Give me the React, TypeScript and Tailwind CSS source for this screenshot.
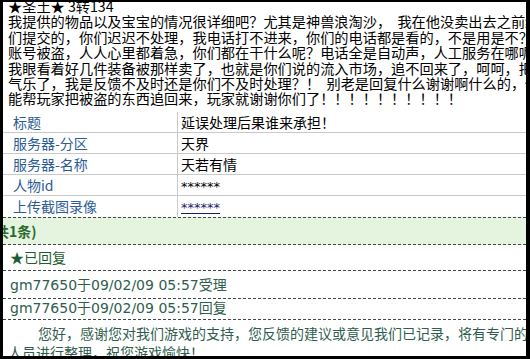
import React from "react";

const lines = [
  "★圣土★ 3转134",
  "我提供的物品以及宝宝的情况很详细吧？尤其是神兽浪淘沙，  我在他没卖出去之前给",
  "们提交的，你们迟迟不处理，我电话打不进来，你们的电话都是看的，不是用是不？",
  "账号被盗，人人心里都着急，你们都在干什么呢？电话全是自动声，人工服务在哪呢",
  "我眼看着好几件装备被那样卖了，也就是你们说的流入市场，追不回来了，呵呵，把",
  "气乐了，我是反馈不及时还是你们不及时处理？！  别老是回复什么谢谢啊什么的，你",
  "能帮玩家把被盗的东西追回来，玩家就谢谢你们了！！！！！！！！！！",
];

const rows: { label: string; value: string; link?: boolean; star?: boolean }[] = [
  { label: "标题", value: "延误处理后果谁来承担！" },
  { label: "服务器-分区", value: "天界" },
  { label: "服务器-名称", value: "天若有情" },
  { label: "人物id", value: "******", star: true },
  { label: "上传截图录像", value: "******", star: true, link: true },
];

export default function App() {
  return (
    <div className="w-[530px] h-[359px] bg-black pt-[2px] pl-[3px]">
      <div className="w-[523px] h-[354px] bg-white overflow-hidden">
        <div className="-mt-[3px] font-['Noto_Sans_CJK_SC',sans-serif] text-black">
          <div className="pl-[5px] text-[14.2px] leading-[15.4px]">
            {lines.map((l, i) => (
              <div key={i} className="whitespace-pre">
                {l}
              </div>
            ))}
          </div>

          <div className="mt-[5px] text-[14px]">
            {rows.map((r, i) => (
              <div
                key={i}
                className={
                  i < rows.length - 1
                    ? "flex h-[21px] border-b border-[#c9c9c9]"
                    : "flex h-[21px]"
                }
              >
                <div className="w-[175px] shrink-0 border-r border-[#c9c9c9] pl-[10px] leading-[20px] text-[#2d5b96] whitespace-nowrap">
                  {r.label}
                </div>
                <div className="pl-[3px] leading-[20px] whitespace-nowrap">
                  {r.star ? (
                    <span
                      className={
                        r.link
                          ? "font-['DejaVu_Sans',sans-serif] text-[13px] text-[#1b1b6b] underline"
                          : "font-['DejaVu_Sans',sans-serif] text-[13px]"
                      }
                    >
                      {r.value}
                    </span>
                  ) : (
                    r.value
                  )}
                </div>
              </div>
            ))}
          </div>

          <div className="h-[28px] border-y border-dashed border-[#3d4a45] bg-[#e4f4de] flex items-center">
            <span className="-ml-[8px] text-[14px] font-bold text-[#2a6a2e] leading-none whitespace-nowrap">
              共1条)
            </span>
          </div>

          <div className="h-[26px] border-b border-dashed border-[#3d4a45] flex items-center pl-[7px] text-[14px] text-[#1e5d2f]">
            ★已回复
          </div>

          <div className="h-[28px] border-b border-dashed border-[#3d4a45] flex items-center pt-[3px] pl-[7px] text-[14px] text-[#2f5e4e] font-['DejaVu_Sans','Noto_Sans_CJK_SC',sans-serif] whitespace-nowrap">
            gm77650于09/02/09 05:57受理
          </div>

          <div className="h-[21px] border-b border-dashed border-[#3d4a45] flex items-center pl-[7px] text-[14px] text-[#2f5e4e] font-['DejaVu_Sans','Noto_Sans_CJK_SC',sans-serif] whitespace-nowrap">
            gm77650于09/02/09 05:57回复
          </div>

          <div className="pt-[4px] pl-[5px] text-[14px] leading-[19px] text-[#2f5e4e] indent-[30px] w-[560px]">
            您好，感谢您对我们游戏的支持，您反馈的建议或意见我们已记录，将有专门的工作人员进行整理，祝您游戏愉快！
          </div>
        </div>
      </div>
    </div>
  );
}
